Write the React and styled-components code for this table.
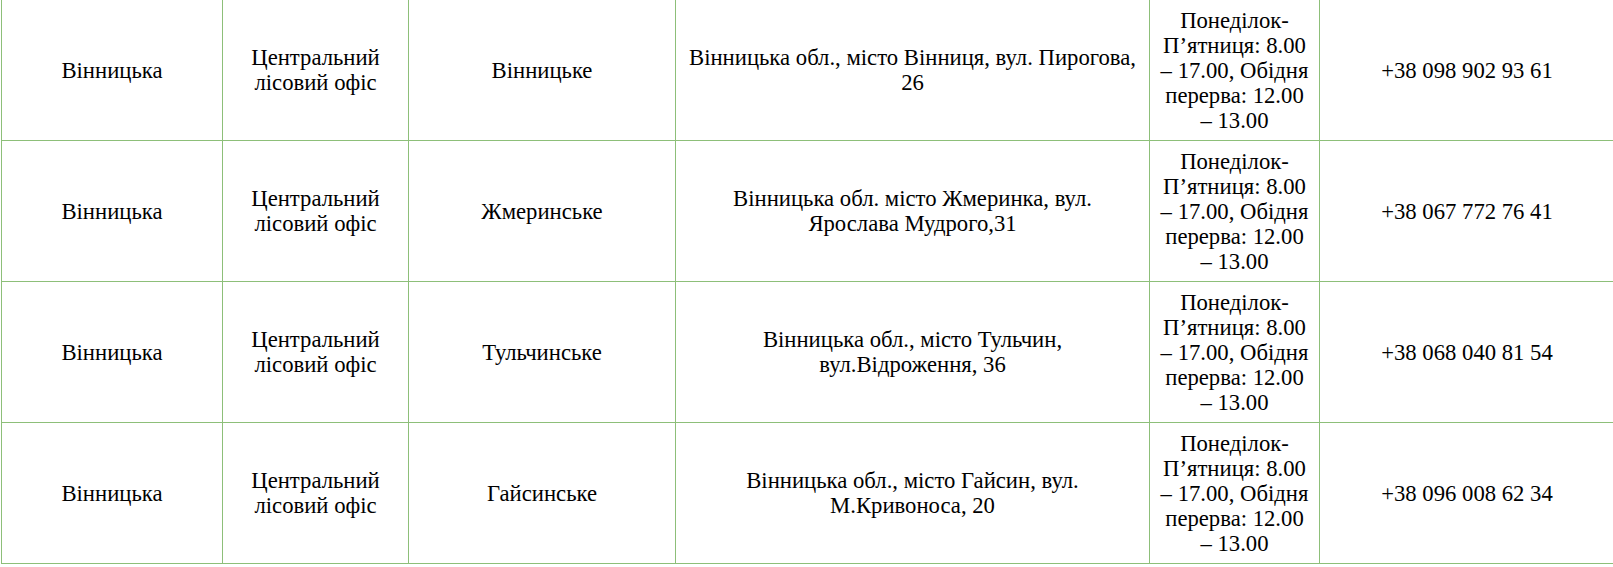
import React from 'react'
import styled, { createGlobalStyle } from 'styled-components'

const GlobalStyle = createGlobalStyle`
  html, body {
    margin: 0;
    padding: 0;
    background: #fff;
    overflow: hidden;
    font-family: "Liberation Serif", "Times New Roman", serif;
  }
`

const Wrap = styled.div`
  padding-left: 1px;
  margin-top: -1px;
`

const Table = styled.table`
  border-collapse: collapse;
  width: 1613px;
  table-layout: fixed;
`

const Cell = styled.td`
  border: 1px solid #8dbf79;
  height: 141px;
  box-sizing: border-box;
  padding: 0 5px;
  text-align: center;
  vertical-align: middle;
  font-family: "Liberation Serif", "Times New Roman", serif;
  font-size: 22.7px;
  line-height: 25px;
  color: #000;
`

const Lines = ({ lines }) =>
  lines.map((l, i) => (
    <React.Fragment key={i}>
      {i > 0 && <br />}
      {l}
    </React.Fragment>
  ))

const cols = [221, 186, 267, 474, 170, 295]

const hours = ['Понеділок-', 'П’ятниця: 8.00', '– 17.00, Обідня', 'перерва: 12.00', '– 13.00']

const rows = [
  {
    town: 'Вінницьке',
    address: ['Вінницька обл., місто Вінниця, вул. Пирогова,', '26'],
    phone: '+38 098 902 93 61',
  },
  {
    town: 'Жмеринське',
    address: ['Вінницька обл. місто Жмеринка, вул.', 'Ярослава Мудрого,31'],
    phone: '+38 067 772 76 41',
  },
  {
    town: 'Тульчинське',
    address: ['Вінницька обл., місто Тульчин,', 'вул.Відроження, 36'],
    phone: '+38 068 040 81 54',
  },
  {
    town: 'Гайсинське',
    address: ['Вінницька обл., місто Гайсин, вул.', 'М.Кривоноса, 20'],
    phone: '+38 096 008 62 34',
  },
]

export default function App() {
  return (
    <>
      <GlobalStyle />
      <Wrap>
        <Table>
          <colgroup>
            {cols.map((w, i) => (
              <col key={i} style={{ width: w }} />
            ))}
          </colgroup>
          <tbody>
            {rows.map((r) => (
              <tr key={r.town}>
                <Cell>Вінницька</Cell>
                <Cell>Центральний лісовий офіс</Cell>
                <Cell>{r.town}</Cell>
                <Cell>
                  <Lines lines={r.address} />
                </Cell>
                <Cell>
                  <Lines lines={hours} />
                </Cell>
                <Cell>{r.phone}</Cell>
              </tr>
            ))}
          </tbody>
        </Table>
      </Wrap>
    </>
  )
}
